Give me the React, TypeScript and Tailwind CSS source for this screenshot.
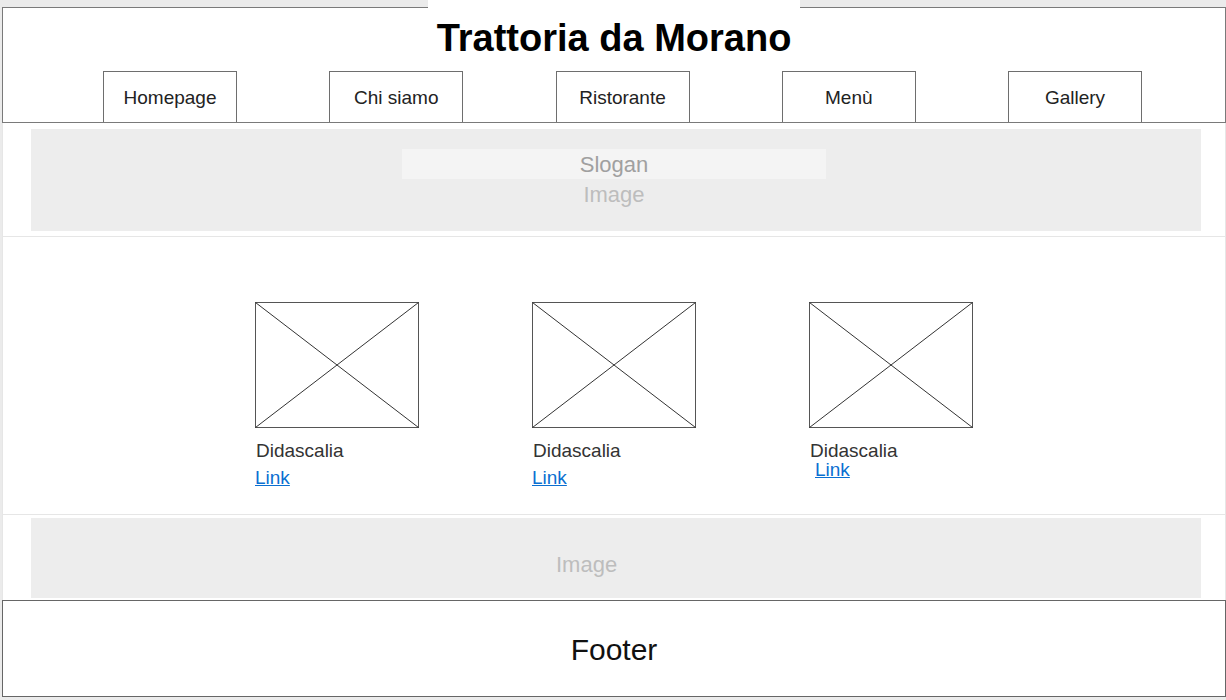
const navItems = ["Homepage", "Chi siamo", "Ristorante", "Menù", "Gallery"];

const Placeholder = () => (
  <svg width="164" height="126" viewBox="0 0 164 126" className="block">
    <rect x="0.5" y="0.5" width="163" height="125" fill="white" stroke="#555" />
    <line x1="0.5" y1="0.5" x2="163.5" y2="125.5" stroke="#333" />
    <line x1="163.5" y1="0.5" x2="0.5" y2="125.5" stroke="#333" />
  </svg>
);

const Card = ({ linkClass = "" }: { linkClass?: string }) => (
  <div className="w-[164px]">
    <Placeholder />
    <div className="mt-[9px] pl-[1px] text-[19px] leading-[27px] text-[#333]">Didascalia</div>
    <a href="#" className={`block text-[19px] leading-[27px] text-[#0b6fd1] underline ${linkClass}`}>
      Link
    </a>
  </div>
);

export default function App() {
  return (
    <div
      className="w-[1226px] h-[700px] bg-[#ebebeb] pt-[7px] pl-[2px]"
      style={{ fontFamily: '"Liberation Sans", Arial, sans-serif' }}
    >
      {/* header */}
      <header className="h-[116px] border border-[#7a7a7a] bg-white">
        <h1 className="-mt-[8px] ml-[425px] w-[372px] bg-white pt-[19px] text-center text-[38px] font-bold leading-[38px] text-black">
          Trattoria da Morano
        </h1>
        <nav className="mt-[14px] ml-[100px] flex w-[1039px] justify-between">
          {navItems.map((item) => (
            <div
              key={item}
              className="flex h-[51px] w-[134px] items-center justify-center border-x border-t border-[#6e6e6e] pt-[2px] text-[19px] text-[#222]"
            >
              {item}
            </div>
          ))}
        </nav>
      </header>

      {/* hero */}
      <section className="h-[114px] border-x border-b border-[#e6e6e6] bg-white pt-[6px]">
        <div className="ml-[28px] h-[102px] w-[1170px] bg-[#ededed] pt-[20px]">
          <div className="ml-[371px] flex h-[30px] w-[424px] items-center justify-center bg-[#f4f4f4] text-[22px] text-[#a0a0a0]">
            Slogan
          </div>
          <div className="ml-[371px] w-[424px] text-center text-[22px] leading-[32px] text-[#bdbdbd]">Image</div>
        </div>
      </section>

      {/* cards */}
      <section className="h-[278px] border-x border-b border-[#e6e6e6] bg-white pt-[65px]">
        <div className="ml-[252px] flex gap-[113px]">
          <Card />
          <Card />
          <Card linkClass="-mt-[8px] ml-[6px]" />
        </div>
      </section>

      {/* bottom image */}
      <section className="h-[85px] border-x border-[#e6e6e6] bg-white pt-[3px]">
        <div className="ml-[28px] h-[80px] w-[1170px] bg-[#ededed] pl-[525px] pt-[35px] text-[22px] leading-[24px] text-[#bdbdbd]">
          Image
        </div>
      </section>

      {/* footer */}
      <footer className="flex h-[97px] items-center justify-center border border-[#666] bg-white pt-[2px] text-[30px] text-[#111]">
        Footer
      </footer>
    </div>
  );
}
